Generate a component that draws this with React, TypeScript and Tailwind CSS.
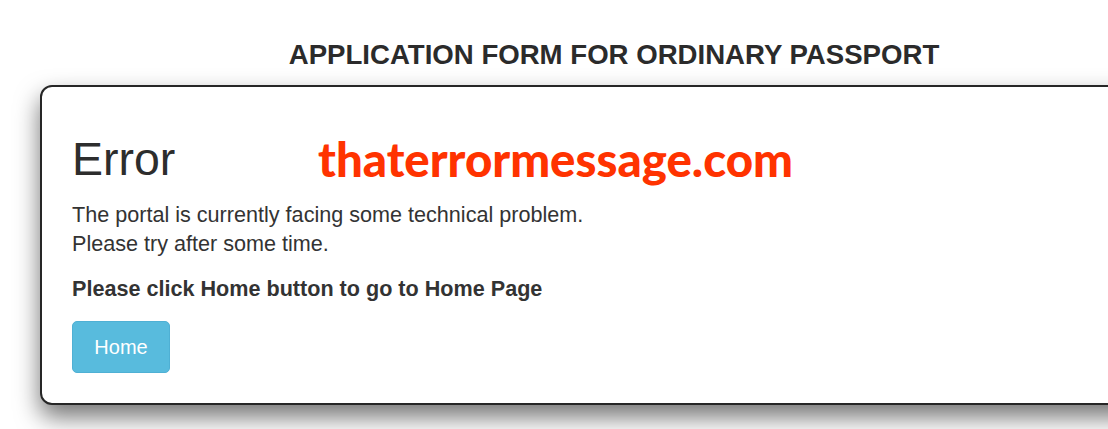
import React from "react";

export default function App() {
  return (
    <div className="w-[1108px] h-[429px] overflow-hidden bg-white">
      <div className="w-[1228px] font-['Liberation_Sans',Arial,sans-serif]">
        <h1 className="pt-[39px] text-center text-[27.6px] leading-[32px] font-bold text-[#2b2b2b]">
          APPLICATION FORM FOR ORDINARY PASSPORT
        </h1>
        <div className="relative mt-[14px] ml-[40px] w-[1148px] rounded-[12px] border-2 border-[#262626] bg-white pl-[30px] pt-[47px] pb-[30px] shadow-[0_12px_24px_rgba(0,0,0,0.55)]">
          <h2 className="text-[46.5px] leading-[51px] font-normal text-[#2d2d2d]">Error</h2>
          <p className="mt-[15px] text-[21.6px] leading-[29px] text-[#333]">
            The portal is currently facing some technical problem.
            <br />
            Please try after some time.
          </p>
          <p className="mt-[16px] text-[21.6px] leading-[29px] font-bold text-[#333]">
            Please click Home button to go to Home Page
          </p>
          <button className="mt-[18px] flex h-[52px] w-[98px] items-center justify-center rounded-[5px] border border-[#4fb0d4] bg-[#58bbdd] text-[20px] text-white">
            Home
          </button>
          <div className="absolute left-[276px] top-[48px] font-['Lato',sans-serif] text-[47.4px] leading-none font-black text-[#ff3300]">
            thaterrormessage.com
          </div>
        </div>
      </div>
    </div>
  );
}
